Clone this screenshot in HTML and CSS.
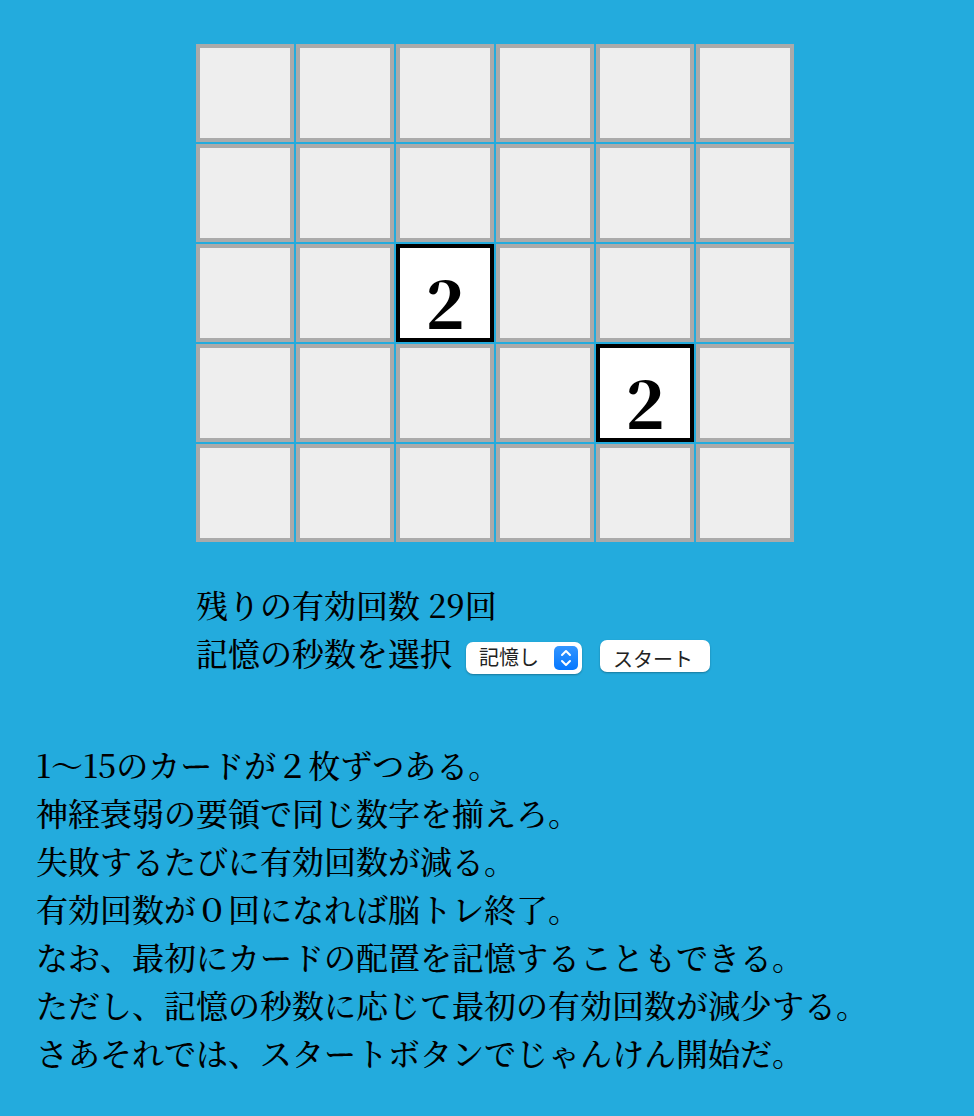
FILE: index.html
```html
<!DOCTYPE html>
<html lang="ja">
<head>
<meta charset="utf-8">
<title>神経衰弱</title>
<link rel="stylesheet" href="styles.css">
</head>
<body>
<main class="game">
  <div class="board">
    <button class="card"></button><button class="card"></button><button class="card"></button><button class="card"></button><button class="card"></button><button class="card"></button>
    <button class="card"></button><button class="card"></button><button class="card"></button><button class="card"></button><button class="card"></button><button class="card"></button>
    <button class="card"></button><button class="card"></button><button class="card open">2</button><button class="card"></button><button class="card"></button><button class="card"></button>
    <button class="card"></button><button class="card"></button><button class="card"></button><button class="card"></button><button class="card open">2</button><button class="card"></button>
    <button class="card"></button><button class="card"></button><button class="card"></button><button class="card"></button><button class="card"></button><button class="card"></button>
  </div>
  <section class="status">
    <p class="line">残りの有効回数 29回</p>
    <div class="controls">
      <label for="seconds">記憶の秒数を選択</label>
      <span class="picker">
        <select id="seconds" class="select"><option>記憶し</option></select>
        <svg class="arrows" viewBox="0 0 24 24" aria-hidden="true"><defs><linearGradient id="blue" x2="0" y2="1"><stop stop-color="#3395ff"/><stop offset="1" stop-color="#0577ff"/></linearGradient></defs><rect width="24" height="24" rx="5" fill="url(#blue)"/><path d="M8 9 12 5l4 4M8 15l4 4 4-4"/></svg>
      </span>
      <button class="start">スタート</button>
    </div>
  </section>
</main>
<section class="rules">
  <p class="line">1〜15のカードが２枚ずつある。</p>
  <p class="line">神経衰弱の要領で同じ数字を揃えろ。</p>
  <p class="line">失敗するたびに有効回数が減る。</p>
  <p class="line">有効回数が０回になれば脳トレ終了。</p>
  <p class="line">なお、最初にカードの配置を記憶することもできる。</p>
  <p class="line">ただし、記憶の秒数に応じて最初の有効回数が減少する。</p>
  <p class="line">さあそれでは、スタートボタンでじゃんけん開始だ。</p>
</section>
</body>
</html>
```
FILE: styles.css
```css
* { box-sizing: border-box; }
body {
  margin: 0;
  padding: 44px 36px 36px;
  background: #23abdd;
  color: #000;
  font-family: "Noto Serif CJK JP", "Liberation Serif", "Noto Sans CJK JP", serif;
  font-weight: 500;
  font-size: 32px;
  line-height: 48px;
}
.game { padding-left: 160px; }
.board {
  display: grid;
  grid-template-columns: repeat(6, 98px);
  grid-auto-rows: 98px;
  gap: 2px;
}
.card {
  padding: 16px 0 0;
  border: 4px solid #aaa;
  background: #eee;
  color: #000;
  font: 900 64px/64px "Noto Serif CJK JP", "Liberation Serif", serif;
}
.open { border-color: #000; background: #fff; }
.status { margin-top: 38px; }
.line { margin: 0; }
.controls { display: flex; align-items: center; }
.picker { position: relative; display: flex; margin: 12px 18px 0 14px; }
.select, .start {
  height: 32px;
  border: 0;
  border-radius: 7px;
  background: #fff;
  color: #222;
  font: 20px/32px "Liberation Sans", "Noto Sans CJK JP", sans-serif;
  box-shadow: 0 1px 2px rgb(0 0 0 / 30%);
}
.select { width: 116px; padding: 0 28px 0 13px; appearance: none; }
.start { width: 110px; margin-top: 8px; padding: 4px 4px 0 0; }
.arrows {
  position: absolute;
  right: 4px;
  top: 4px;
  width: 24px;
  height: 24px;
  pointer-events: none;
}
.arrows path { fill: none; stroke: #fff; stroke-width: 2; stroke-linecap: round; stroke-linejoin: round; }
.rules { margin-top: 64px; }
```
